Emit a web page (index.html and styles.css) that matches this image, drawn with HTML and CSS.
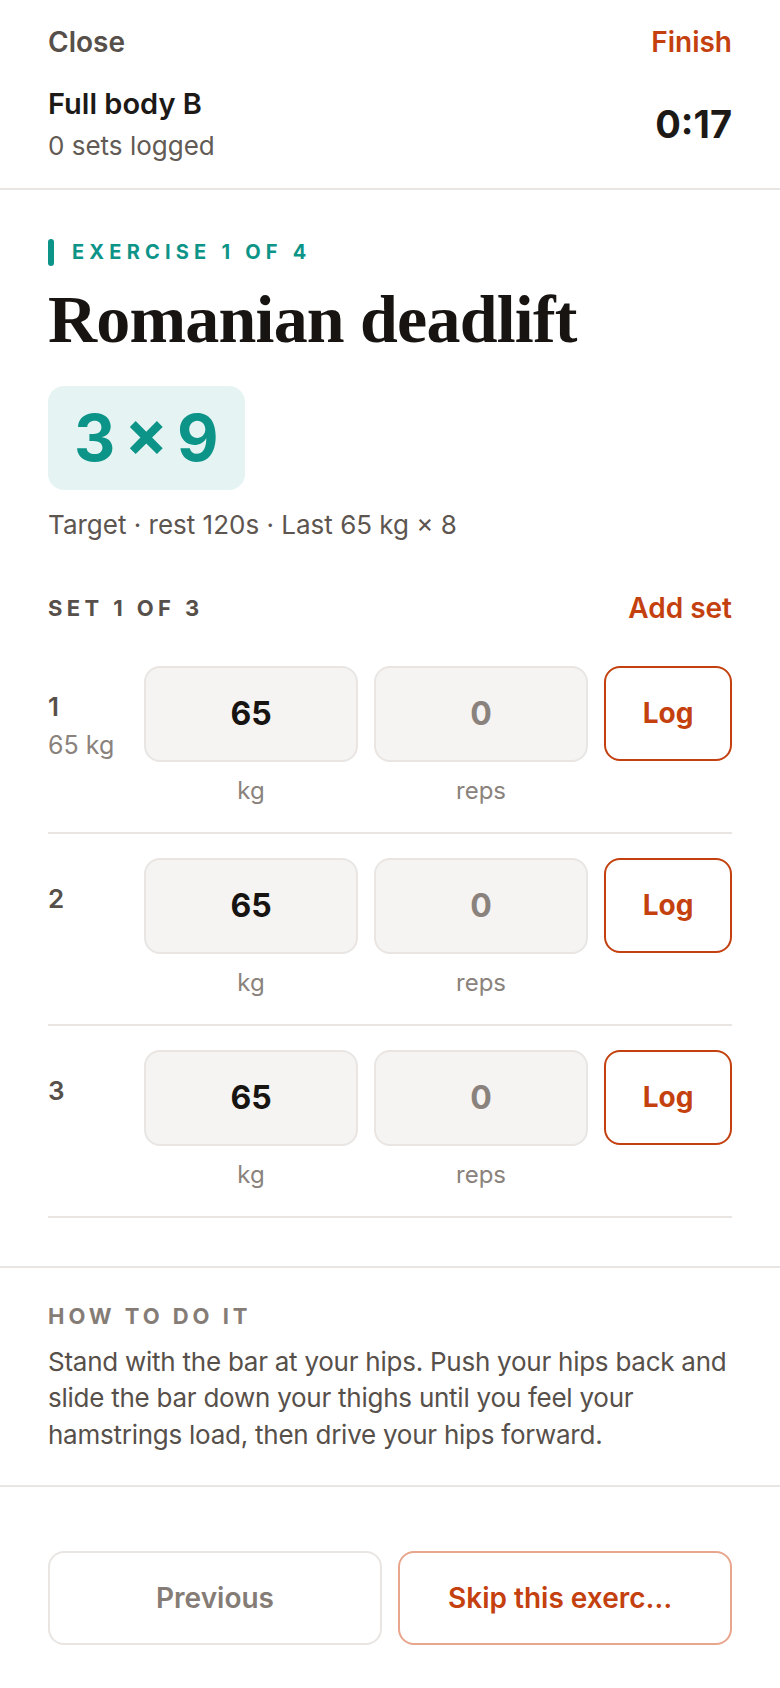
FILE: index.html
```html
<!DOCTYPE html>
<html>
<head>
    <meta charset="utf-8">
    <title>Workout - Romanian deadlift</title>
    <link rel="stylesheet" href="styles.css">
</head>
<body>
    <!-- Top bar: close / finish, workout name and timer -->
    <header class="topbar">
        <div class="topbar-row">
            <a class="link-muted" href="#">Close</a>
            <a class="link-accent" href="#">Finish</a>
        </div>
        <div class="topbar-info">
            <div>
                <div class="workout-name">Full body B</div>
                <div class="workout-meta">0 sets logged</div>
            </div>
            <div class="timer">0:17</div>
        </div>
    </header>

    <!-- Current exercise -->
    <section class="exercise">
        <div class="eyebrow">EXERCISE 1 OF 4</div>
        <h1 class="exercise-title">Romanian deadlift</h1>
        <div class="target-pill">3 × 9</div>
        <p class="target-meta">Target · rest 120s · Last 65 kg × 8</p>

        <div class="sets-head">
            <span class="sets-label">SET 1 OF 3</span>
            <a class="link-accent" href="#">Add set</a>
        </div>

        <div class="sets">
            <div class="set-row">
                <div class="set-num">
                    <div class="set-index">1</div>
                    <div class="set-prev">65 kg</div>
                </div>
                <label class="field">
                    <input class="field-input" type="text" value="65">
                    <span class="field-unit">kg</span>
                </label>
                <label class="field">
                    <input class="field-input" type="text" placeholder="0">
                    <span class="field-unit">reps</span>
                </label>
                <button class="btn-log">Log</button>
            </div>
            <div class="set-row">
                <div class="set-num">
                    <div class="set-index">2</div>
                </div>
                <label class="field">
                    <input class="field-input" type="text" value="65">
                    <span class="field-unit">kg</span>
                </label>
                <label class="field">
                    <input class="field-input" type="text" placeholder="0">
                    <span class="field-unit">reps</span>
                </label>
                <button class="btn-log">Log</button>
            </div>
            <div class="set-row">
                <div class="set-num">
                    <div class="set-index">3</div>
                </div>
                <label class="field">
                    <input class="field-input" type="text" value="65">
                    <span class="field-unit">kg</span>
                </label>
                <label class="field">
                    <input class="field-input" type="text" placeholder="0">
                    <span class="field-unit">reps</span>
                </label>
                <button class="btn-log">Log</button>
            </div>
        </div>
    </section>

    <!-- Instructions -->
    <section class="howto">
        <div class="howto-label">HOW TO DO IT</div>
        <p class="howto-text">Stand with the bar at your hips. Push your hips back and slide the bar down your thighs until you feel your hamstrings load, then drive your hips forward.</p>
    </section>

    <!-- Navigation between exercises -->
    <footer class="bottom-nav">
        <button class="btn-nav">Previous</button>
        <button class="btn-nav btn-skip">Skip this exercise</button>
    </footer>
</body>
</html>
```

FILE: styles.css
```css
html, body {
    margin: 0;
    padding: 0;
    background: #ffffff;
    font-family: Inter, "Noto Sans", sans-serif;
    color: #1c1917;
}
a { text-decoration: none; }
p { margin: 0; }

/* top bar */
.topbar {
    padding: 24px 48px 26px;
    border-bottom: 2px solid #e9e5e2;
}
.topbar-row {
    display: flex;
    justify-content: space-between;
    font-size: 28px;
    line-height: 36px;
    font-weight: 600;
}
.link-muted { color: #57504a; }
.link-accent {
    color: #c4410f;
    font-size: 28px;
    font-weight: 600;
}
.topbar-info {
    display: flex;
    justify-content: space-between;
    align-items: center;
    margin-top: 26px;
}
.workout-name {
    font-size: 29px;
    line-height: 36px;
    font-weight: 600;
}
.workout-meta {
    margin-top: 8px;
    font-size: 26px;
    line-height: 32px;
    color: #625a54;
}
.timer {
    font-size: 38px;
    font-weight: 700;
}

/* exercise */
.exercise {
    padding: 48px 48px 48px;
}
.eyebrow {
    display: flex;
    align-items: center;
    gap: 18px;
    font-size: 20px;
    line-height: 28px;
    font-weight: 700;
    letter-spacing: 0.26em;
    color: #0d9488;
}
.eyebrow::before {
    content: "";
    width: 6px;
    height: 27px;
    border-radius: 3px;
    background: #0d9488;
}
.exercise-title {
    margin: 16px 0 0;
    font-family: "Liberation Serif", serif;
    font-size: 68px;
    line-height: 1.1;
    font-weight: 700;
    letter-spacing: -0.8px;
    color: #171412;
}
.target-pill {
    display: inline-block;
    margin-top: 29px;
    padding: 20px 26px;
    border-radius: 16px;
    background: #e5f4f2;
    color: #0d9488;
    font-size: 64px;
    line-height: 64px;
    font-weight: 700;
    word-spacing: -6px;
}
.target-meta {
    margin-top: 20px;
    font-size: 26px;
    line-height: 30px;
    color: #5d5550;
}

.sets-head {
    display: flex;
    justify-content: space-between;
    align-items: center;
    margin-top: 50px;
    line-height: 36px;
}
.sets-label {
    font-size: 22px;
    font-weight: 700;
    letter-spacing: 0.2em;
    color: #57504a;
}
.sets { margin-top: 16px; }
.set-row {
    display: grid;
    grid-template-columns: 80px 1fr 1fr 128px;
    column-gap: 16px;
    align-items: start;
    padding: 24px 0;
    border-bottom: 2px solid #e9e5e2;
}
.set-num { padding-top: 23px; }
.set-index {
    font-size: 26px;
    line-height: 36px;
    font-weight: 600;
    color: #57504a;
}
.set-prev {
    margin-top: 6px;
    font-size: 25px;
    line-height: 28px;
    color: #8a827c;
}
.field {
    display: flex;
    flex-direction: column;
    align-items: stretch;
}
.field-input {
    box-sizing: border-box;
    width: 100%;
    height: 96px;
    border: 2px solid #e9e5e2;
    border-radius: 16px;
    background: #f5f4f2;
    text-align: center;
    font-family: Inter, sans-serif;
    font-size: 32px;
    font-weight: 700;
    color: #171412;
    outline: none;
}
.field-input::placeholder { color: #8a827c; }
.field-unit {
    margin-top: 12px;
    text-align: center;
    font-size: 24px;
    line-height: 34px;
    color: #8a827c;
}
.btn-log {
    height: 95px;
    border: 2px solid #c4410f;
    border-radius: 16px;
    background: #ffffff;
    color: #c4410f;
    font-family: Inter, sans-serif;
    font-size: 28px;
    font-weight: 700;
}

/* how to */
.howto {
    padding: 32px 48px 32px;
    border-top: 2px solid #e9e5e2;
}
.howto-label {
    font-size: 22px;
    line-height: 32px;
    font-weight: 700;
    letter-spacing: 0.18em;
    color: #857c76;
}
.howto-text {
    margin-top: 12px;
    font-size: 26px;
    line-height: 1.4;
    letter-spacing: -0.25px;
    color: #57504a;
}

/* bottom buttons */
.bottom-nav {
    display: grid;
    grid-template-columns: 1fr 1fr;
    gap: 16px;
    padding: 64px 48px 44px;
    border-top: 2px solid #e9e5e2;
}
.btn-nav {
    height: 94px;
    padding: 0 48px;
    border: 2px solid #e9e5e2;
    border-radius: 16px;
    background: #ffffff;
    color: #857c76;
    font-family: Inter, sans-serif;
    font-size: 28px;
    font-weight: 600;
    white-space: nowrap;
    overflow: hidden;
    text-overflow: ellipsis;
}
.btn-skip {
    padding: 0 55px 0 48px;
    border-color: #e8a68c;
    color: #c4410f;
    text-align: left;
}
```
